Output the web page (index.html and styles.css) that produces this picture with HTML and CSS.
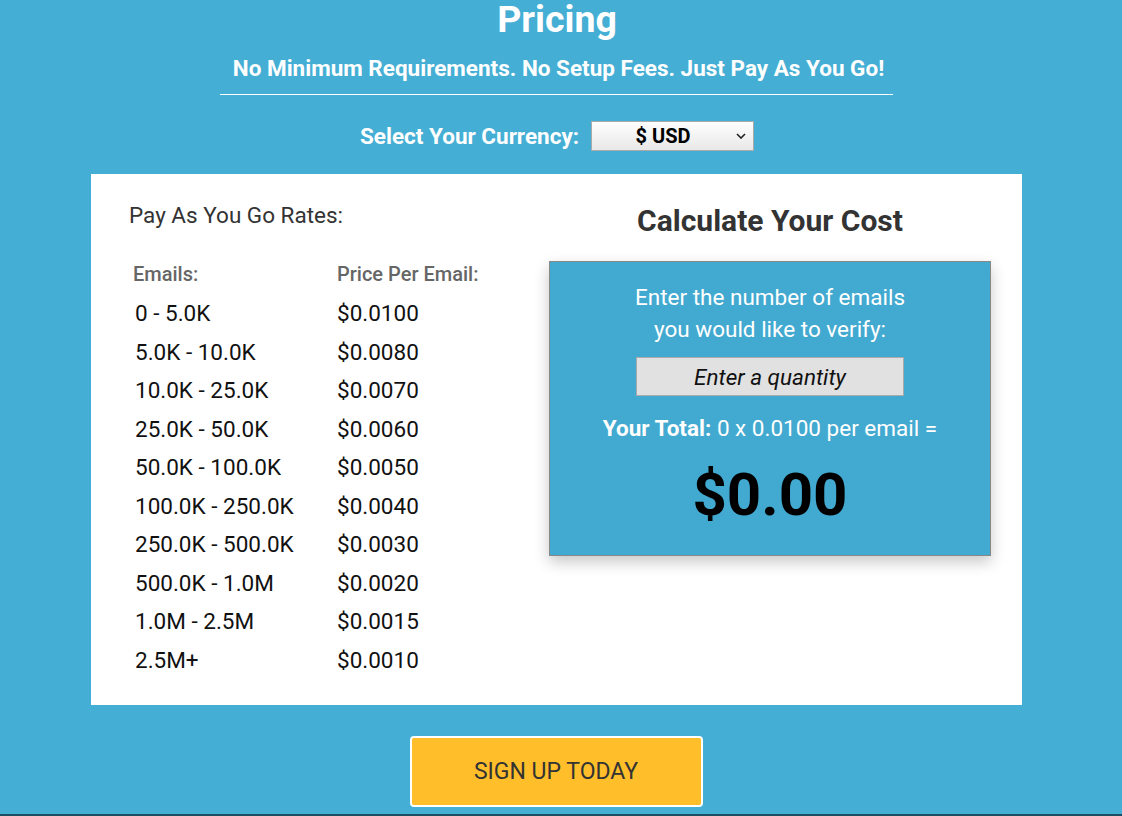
FILE: index.html
```html
<!DOCTYPE html>
<html>
<head>
<meta charset="utf-8">
<link rel="stylesheet" href="styles.css">
</head>
<body>
<div class="page">
  <h1 class="title">Pricing</h1>
  <p class="subtitle">No Minimum Requirements. No Setup Fees. Just Pay As You Go!</p>
  <hr class="rule">
  <div class="currency">
    <span class="currency-label">Select Your Currency:</span>
    <div class="select"><span class="select-value">$ USD</span>
      <svg class="chev" width="10" height="6" viewBox="0 0 10 6"><path d="M1 1l4 4 4-4" fill="none" stroke="#222" stroke-width="1.6"/></svg>
    </div>
  </div>
  <div class="card">
    <div class="rates">
      <div class="rates-title">Pay As You Go Rates:</div>
      <div class="table">
        <div class="th">Emails:</div><div class="th">Price Per Email:</div>
        <div class="td">0 - 5.0K</div><div class="td">$0.0100</div>
        <div class="td">5.0K - 10.0K</div><div class="td">$0.0080</div>
        <div class="td">10.0K - 25.0K</div><div class="td">$0.0070</div>
        <div class="td">25.0K - 50.0K</div><div class="td">$0.0060</div>
        <div class="td">50.0K - 100.0K</div><div class="td">$0.0050</div>
        <div class="td">100.0K - 250.0K</div><div class="td">$0.0040</div>
        <div class="td">250.0K - 500.0K</div><div class="td">$0.0030</div>
        <div class="td">500.0K - 1.0M</div><div class="td">$0.0020</div>
        <div class="td">1.0M - 2.5M</div><div class="td">$0.0015</div>
        <div class="td">2.5M+</div><div class="td">$0.0010</div>
      </div>
    </div>
    <div class="calc">
      <h2 class="calc-title">Calculate Your Cost</h2>
      <div class="calc-box">
        <p class="calc-text">Enter the number of emails<br>you would like to verify:</p>
        <div class="qty">Enter a quantity</div>
        <p class="total"><b>Your Total:</b> 0 x 0.0100 per email =</p>
        <div class="amount">$0.00</div>
      </div>
    </div>
  </div>
  <div class="cta"><a class="btn">SIGN UP TODAY</a></div>
</div>
<div class="footer-edge"></div>
</body>
</html>
```
FILE: styles.css
```css
html, body { margin: 0; padding: 0; }
body {
  background: #44aed4;
  font-family: Roboto, "Liberation Sans", sans-serif;
  height: 816px;
  overflow: hidden;
  position: relative;
}
.page { display: flex; flex-direction: column; align-items: center; }
.title {
  margin: 0 0 0 -8px;
  font-size: 37.5px;
  line-height: 38px;
  font-weight: 700;
  color: #fff;
}
.subtitle {
  margin: 16px 0 0 -5px;
  font-size: 22.5px;
  line-height: 28px;
  font-weight: 700;
  color: #fff;
}
.rule {
  width: 673px;
  margin: 12px 0 0 -10px;
  border: 0;
  border-top: 1px solid #fff;
  height: 0;
}
.currency {
  display: flex;
  align-items: center;
  gap: 12px;
  margin-top: 26px;
  margin-left: -8px;
}
.currency-label { color: #fff; font-weight: 700; font-size: 22.5px; }
.select {
  width: 161px;
  height: 28px;
  border: 1px solid #aaa;
  background: linear-gradient(#fefefe, #e8e8e8);
  display: flex;
  align-items: center;
  position: relative;
  box-sizing: content-box;
}
.select-value {
  flex: 1;
  text-align: center;
  font-weight: 700;
  font-size: 20px;
  color: #000;
  padding-right: 2px;
}
.chev { margin-right: 7px; }
.card {
  margin-top: 23px;
  margin-left: -9px;
  width: 931px;
  height: 531px;
  background: #fff;
  display: flex;
  box-sizing: border-box;
  padding: 28px 31px 0 38px;
}
.rates { width: 420px; }
.rates-title { font-size: 22.5px; color: #333; line-height: 26px; }
.table {
  margin-top: 34px;
  display: grid;
  grid-template-columns: 204px 1fr;
  padding-left: 4px;
}
.th { font-size: 20px; font-weight: 500; color: #666; line-height: 24px; margin-bottom: 8px; }
.td { font-size: 22.5px; color: #111; line-height: 38.55px; padding-left: 2px; }
.td:nth-child(even) { padding-left: 0; }
.calc { margin-left: auto; width: 442px; display: flex; flex-direction: column; align-items: center; }
.calc-title {
  margin: 0;
  font-size: 30px;
  font-weight: 700;
  color: #333;
  line-height: 36px;
  padding-top: 1px;
}
.calc-box {
  margin-top: 22px;
  width: 442px;
  height: 295px;
  box-sizing: border-box;
  background: #42a9d0;
  border: 1px solid #888;
  box-shadow: 0 6px 14px rgba(0,0,0,0.22);
  display: flex;
  flex-direction: column;
  align-items: center;
  color: #fff;
}
.calc-text {
  margin: 19px 0 0;
  font-size: 22.5px;
  line-height: 32px;
  text-align: center;
}
.qty {
  margin-top: 12px;
  width: 268px;
  height: 39px;
  box-sizing: border-box;
  background: #e1e1e1;
  border: 1px solid #aaa;
  color: #111;
  font-style: italic;
  font-size: 22.5px;
  display: flex;
  align-items: center;
  justify-content: center;
}
.total {
  margin: 19px 0 0;
  font-size: 22.5px;
  line-height: 26px;
}
.amount {
  margin-top: 24px;
  font-size: 60px;
  font-weight: 700;
  color: #000;
  line-height: 60px;
}
.cta { margin-top: 31px; margin-left: -10px; }
.btn {
  display: flex;
  align-items: center;
  justify-content: center;
  width: 293px;
  height: 71px;
  box-sizing: border-box;
  background: #ffbe2a;
  border: 2px solid #fff;
  border-radius: 4px;
  color: #333;
  font-size: 23px;
}
.footer-edge {
  position: absolute;
  left: 0; right: 0; bottom: 0;
  height: 2px;
  background: #1d4f62;
}
```
